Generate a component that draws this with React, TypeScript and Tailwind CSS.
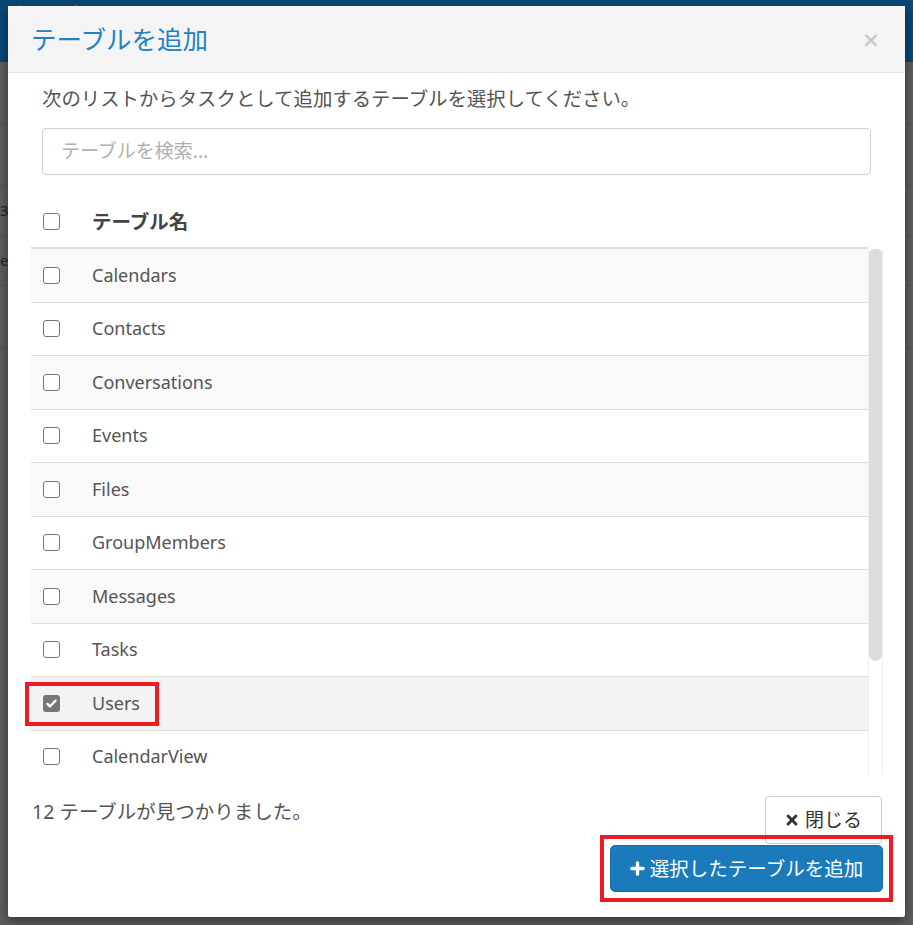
const font = "font-['Noto_Sans','Noto_Sans_CJK_JP',sans-serif]"

const tables = [
  "Calendars",
  "Contacts",
  "Conversations",
  "Events",
  "Files",
  "GroupMembers",
  "Messages",
  "Tasks",
  "Users",
  "CalendarView",
]

function Checkbox({ checked = false }: { checked?: boolean }) {
  if (checked) {
    return (
      <span className="flex h-[17px] w-[17px] items-center justify-center rounded-[3px] bg-[#767676]">
        <svg viewBox="0 0 16 16" className="h-[13px] w-[13px]">
          <path d="M3 8.5l3 3 7-7" fill="none" stroke="#fff" strokeWidth="2.8" strokeLinecap="round" strokeLinejoin="round" />
        </svg>
      </span>
    )
  }
  return <span className="block h-[17px] w-[17px] rounded-[3px] border-[1.5px] border-[#767676] bg-white" />
}

export default function App() {
  return (
    <div className={`relative h-[925px] w-[913px] overflow-hidden bg-[#5e5e5e] ${font}`}>
      {/* Dimmed page behind */}
      <div className="flex h-[62px] items-start gap-10 bg-[#0a4876] px-2 pt-0 text-[15px] text-[#3d6a8e]">
        <span>ゾ</span>
        <span>ブ</span>
        <span>ル</span>
      </div>
      <div className="flex flex-col text-[15px] text-[#222]">
        <div className="h-[62px] border-b border-[#555]" />
        <div className="h-[62px] border-b border-[#555]" />
        <div className="flex h-[50px] items-center border-b border-[#555]">3</div>
        <div className="flex h-[50px] items-center border-b border-[#555]">e</div>
        <div className="h-[62px] border-b border-[#555]" />
      </div>

      {/* Modal */}
      <div className="absolute left-[8px] top-[6px] flex h-[911px] w-[897px] flex-col rounded-[2px] bg-white shadow-[0_4px_12px_rgba(0,0,0,0.45)]">
        <div className="flex h-[67px] shrink-0 items-center justify-between border-b border-[#e5e5e5] bg-[#f4f4f4] pl-[23px] pr-[26px]">
          <h2 className="text-[25.5px] font-normal text-[#2183c4]">テーブルを追加</h2>
          <span className="text-[28px] leading-none text-[#c4c4c4]">×</span>
        </div>

        <div className="flex flex-1 flex-col pl-[23px] pr-[22px]">
          <p className="mt-[12px] pl-[11px] text-[19.4px] leading-[28px] text-[#555]">
            次のリストからタスクとして追加するテーブルを選択してください。
          </p>
          <div className="ml-[11px] mt-[15px] flex h-[47px] w-[829px] items-center rounded-[4px] border border-[#cfcfcf] px-[18px] text-[19px] text-[#b0b0b0]">
            テーブルを検索...
          </div>

          <div className="mt-[21px] flex h-[53px] w-[837px] items-center border-b-2 border-[#dddddd]">
            <div className="w-[61px] pl-[12px]">
              <Checkbox />
            </div>
            <span className="text-[19.5px] font-bold text-[#444]">テーブル名</span>
          </div>

          <div className="flex h-[526px] w-[852px]">
            <div className="flex-1 [clip-path:inset(0_0_0_-20px)]">
              {tables.map((t, i) => (
                <div
                  key={t}
                  className={`relative flex h-[53.5px] items-center border-b border-[#dddddd] ${
                    t === "Users" ? "bg-[#f3f3f3]" : i % 2 === 0 ? "bg-[#f9f9f9]" : "bg-white"
                  }`}
                >
                  <div className="w-[61px] pl-[12px]">
                    <Checkbox checked={t === "Users"} />
                  </div>
                  <span className="text-[18px] text-[#555]">{t}</span>
                  {t === "Users" && (
                    <span className="pointer-events-none absolute left-[-6px] top-[5px] h-[44px] w-[134px] border-4 border-[#ec1c24]" />
                  )}
                </div>
              ))}
            </div>
            <div className="flex w-[15px] flex-col border-x border-[#efefef]">
              <div className="h-[412px] rounded-b-[8px] rounded-t-[6px] bg-[#dcdcdc]" />
            </div>
          </div>

          <div className="flex flex-1 justify-between pt-[21px]">
            <span className="pl-[1px] pt-[1px] text-[19.5px] text-[#555]">12 テーブルが見つかりました。</span>
            <div className="flex flex-col items-end">
              <button className="mr-[1px] flex h-[48px] w-[117px] items-center justify-center gap-[6px] rounded-[4px] border border-[#cccccc] bg-white text-[19px] text-[#333]">
                <svg viewBox="0 0 16 16" className="h-[14px] w-[14px]">
                  <path d="M3.5 3.5l9 9M12.5 3.5l-9 9" stroke="#333" strokeWidth="3.4" strokeLinecap="round" />
                </svg>
                閉じる
              </button>
              <div className="relative mt-[1px]">
                <button className="flex h-[47px] w-[273px] items-center justify-center gap-[5px] rounded-[5px] border border-[#176da6] bg-[#1b7bba] text-[19.5px] text-white">
                  <svg viewBox="0 0 16 16" className="h-[15px] w-[15px]">
                    <path d="M8 2v12M2 8h12" stroke="#fff" strokeWidth="3.6" strokeLinecap="round" />
                  </svg>
                  選択したテーブルを追加
                </button>
                <span className="pointer-events-none absolute -inset-[10px] border-4 border-[#ec1c24]" />
              </div>
            </div>
          </div>
        </div>
      </div>
    </div>
  )
}
